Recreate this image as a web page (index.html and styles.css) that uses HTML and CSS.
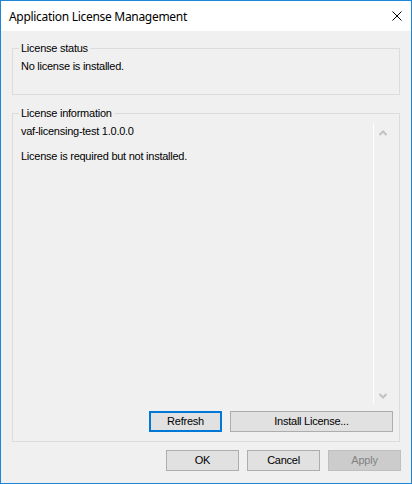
FILE: index.html
```html
<!DOCTYPE html>
<html>
<head>
<meta charset="utf-8">
<link rel="stylesheet" href="styles.css">
</head>
<body>
<div class="window">
  <div class="titlebar">
    <span class="title">Application License Management</span>
    <svg class="close" width="10" height="10" viewBox="0 0 10 10"><path d="M0.5 0.5 L9.5 9.5 M9.5 0.5 L0.5 9.5" stroke="#000" stroke-width="1" fill="none"/></svg>
  </div>
  <div class="client">
    <div class="group group-status">
      <span class="caption">License status</span>
      <div class="status-text">No license is installed.</div>
    </div>
    <div class="group group-info">
      <span class="caption">License information</span>
      <div class="textarea">
        <div class="text">
          <div class="line">vaf-licensing-test 1.0.0.0</div>
          <div class="line line2">License is required but not installed.</div>
        </div>
        <div class="scrollbar">
          <svg width="8" height="6" viewBox="0 0 8 6"><polyline points="0.5,5 4,1.5 7.5,5" stroke="#c2c2c2" stroke-width="2" fill="none"/></svg>
          <svg width="8" height="6" viewBox="0 0 8 6"><polyline points="0.5,1 4,4.5 7.5,1" stroke="#c2c2c2" stroke-width="2" fill="none"/></svg>
        </div>
      </div>
      <div class="group-buttons">
        <button class="btn btn-focus">Refresh</button>
        <button class="btn btn-wide">Install License...</button>
      </div>
    </div>
    <div class="dialog-buttons">
      <button class="btn">OK</button>
      <button class="btn">Cancel</button>
      <button class="btn btn-disabled">Apply</button>
    </div>
  </div>
</div>
</body>
</html>
```
FILE: styles.css
```css
* { box-sizing: border-box; }
html, body { margin: 0; padding: 0; }
body {
  font-family: "Liberation Sans", Arial, sans-serif;
  font-size: 11px;
  letter-spacing: -0.25px;
  line-height: 15px;
  color: #000;
  background: #f0f0f0;
}
.window {
  width: 412px;
  height: 484px;
  border: 1px solid #1c86d8;
  background: #f0f0f0;
  display: flex;
  flex-direction: column;
}
.titlebar {
  height: 30px;
  background: #fff;
  display: flex;
  align-items: center;
  justify-content: space-between;
  padding: 0 9px 0 8px;
}
.title {
  font-family: "Noto Sans", "Liberation Sans", sans-serif;
  font-size: 12px;
  letter-spacing: -0.3px;
  padding-top: 1px;
}
.close { display: block; margin-top: -1px; }
.client {
  flex: 1;
  padding: 17px 10px 0 11px;
  display: flex;
  flex-direction: column;
}
.group {
  border: 1px solid #dcdcdc;
  margin-right: 1px;
}
.caption {
  display: block;
  width: fit-content;
  margin: -8px 0 0 6px;
  padding: 0 2px;
  background: #f0f0f0;
}
.group-status { padding-bottom: 20px; }
.status-text { margin: 3px 0 0 8px; }
.group-info { margin-top: 18px; padding-bottom: 9px; }
.textarea {
  margin: 2px 8px 0 7px;
  height: 281px;
  display: flex;
}
.text { flex: 1; padding: 1px 0 0 1px; }
.line2 { margin-top: 10px; }
.scrollbar {
  width: 18px;
  border-left: 1px solid #ffffff;
  display: flex;
  flex-direction: column;
  justify-content: space-between;
  align-items: center;
  padding: 7px 0 5px 0;
}
.scrollbar svg { display: block; }
.group-buttons {
  margin-top: 7px;
  display: flex;
  justify-content: flex-end;
  gap: 8px;
  padding-right: 6px;
}
.btn {
  font-family: inherit;
  font-size: 11px;
  letter-spacing: -0.25px;
  line-height: 15px;
  height: 21px;
  width: 73px;
  padding: 0;
  margin: 0;
  border: 1px solid #adadad;
  background: #e1e1e1;
  color: #000;
}
.btn-wide { width: 163px; }
.btn-focus { border: 2px solid #0078d7; }
.btn-disabled {
  background: #cccccc;
  border-color: #bfbfbf;
  color: #838383;
}
.dialog-buttons {
  margin-top: 8px;
  display: flex;
  justify-content: flex-end;
  gap: 8px;
}
```
